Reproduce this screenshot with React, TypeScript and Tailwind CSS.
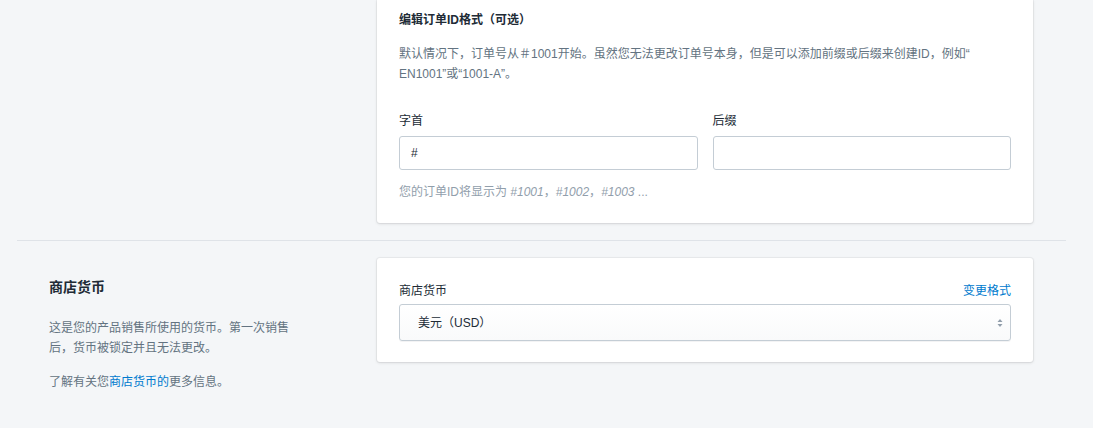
import React from "react";

const font = { fontFamily: '"Liberation Sans", "Noto Sans CJK SC", sans-serif' };

function Card({ children, className = "" }: { children: React.ReactNode; className?: string }) {
  return (
    <div
      className={`w-[656px] bg-white rounded-[3px] shadow-[0_0_0_1px_rgba(63,63,68,0.05),0_1px_3px_0_rgba(63,63,68,0.15)] ${className}`}
    >
      {children}
    </div>
  );
}

export default function App() {
  return (
    <div className="w-[1093px] h-[428px] bg-[#f4f6f8] overflow-hidden text-[#212b36]" style={font}>
      {/* Section 1 */}
      <div className="w-[1049px] ml-[17px] flex px-[32px] pb-[17px] border-b border-[#dfe3e8]">
        <div className="w-[328px]" />
        <Card className="rounded-t-none px-[22px] pt-[12px] pb-[23px]">
          <div className="text-[12px] leading-[16px] font-bold text-[#212b36]">编辑订单ID格式（可选）</div>
          <p className="mt-[16px] text-[12px] leading-[20px] text-[#637381]">
            默认情况下，订单号从＃1001开始。虽然您无法更改订单号本身，但是可以添加前缀或后缀来创建ID，例如“
            <br />
            EN1001”或“1001-A”。
          </p>
          <div className="mt-[29px] flex gap-[15px]">
            <div className="flex-1">
              <div className="text-[12px] leading-[16px] text-[#212b36]">字首</div>
              <div className="mt-[7px] h-[34px] border border-[#c4cdd5] rounded-[3px] flex items-center px-[11px] text-[12px] text-[#212b36]">
                #
              </div>
            </div>
            <div className="flex-1">
              <div className="text-[12px] leading-[16px] text-[#212b36]">后缀</div>
              <div className="mt-[7px] h-[34px] border border-[#c4cdd5] rounded-[3px]" />
            </div>
          </div>
          <div className="mt-[14px] text-[12px] leading-[16px] text-[#919eab]">
            您的订单ID将显示为 <span className="italic">#1001</span>，<span className="italic">#1002</span>，
            <span className="italic">#1003</span> ...
          </div>
        </Card>
      </div>

      {/* Section 2 */}
      <div className="w-[1049px] ml-[17px] flex px-[32px] pt-[17px]">
        <div className="w-[328px] pt-[19px]">
          <div className="text-[14px] leading-[20px] font-bold text-[#212b36]">商店货币</div>
          <p className="mt-[21px] w-[248px] text-[12px] leading-[20px] text-[#637381]">
            这是您的产品销售所使用的货币。第一次销售后，货币被锁定并且无法更改。
          </p>
          <p className="mt-[14px] text-[12px] leading-[20px] text-[#637381]">
            了解有关您<span className="text-[#007ace]">商店货币的</span>更多信息。
          </p>
        </div>
        <Card className="px-[22px] pt-[25px] pb-[21px] self-start">
          <div className="flex justify-between text-[12px] leading-[16px]">
            <span className="text-[#212b36]">商店货币</span>
            <span className="text-[#007ace]">变更格式</span>
          </div>
          <div className="mt-[5px] h-[37px] border border-[#c4cdd5] rounded-[3px] bg-gradient-to-b from-white to-[#f9fafb] shadow-[0_1px_0_0_rgba(22,29,37,0.05)] flex items-center justify-between pl-[18px] pr-[6px]">
            <span className="text-[12px] text-[#212b36]">美元（USD）</span>
            <svg width="8" height="12" viewBox="0 0 8 12">
              <path d="M4 2 L6.5 5 L1.5 5 Z" fill="#919eab" />
              <path d="M4 10 L6.5 7 L1.5 7 Z" fill="#919eab" />
            </svg>
          </div>
        </Card>
      </div>
    </div>
  );
}
